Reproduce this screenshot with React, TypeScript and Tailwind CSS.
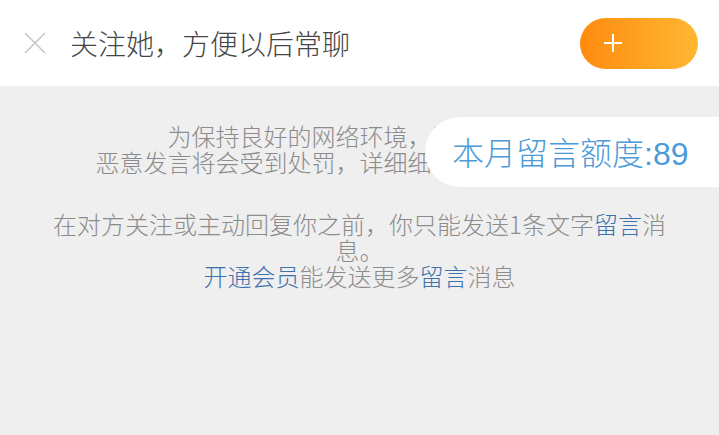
import React from "react";

const font = { fontFamily: '"Noto Sans CJK SC", "Noto Sans", sans-serif' };

export default function App() {
  return (
    <div
      className="relative w-[719px] h-[435px] overflow-hidden bg-[#efefef] font-light"
      style={font}
    >
      <div className="flex h-[86px] items-center bg-white pl-[24px] pr-[21px]">
        <svg width="22" height="22" viewBox="0 0 22 22" className="shrink-0">
          <path d="M1 1 L21 21 M21 1 L1 21" stroke="#c6c6c6" strokeWidth="1.6" fill="none" />
        </svg>
        <div className="ml-[24px] text-[28px] leading-none text-[#454545]">关注她，方便以后常聊</div>
        <button className="ml-auto flex h-[51px] w-[118px] items-center rounded-full bg-gradient-to-r from-[#ff8a0c] to-[#ffb732] pl-[23px]">
          <svg width="20" height="20" viewBox="0 0 20 20">
            <path d="M10 1 V19 M1 10 H19" stroke="#fff" strokeWidth="2" fill="none" />
          </svg>
        </button>
      </div>

      <div className="pt-[37px] text-center text-[24px] leading-[26px] text-[#8c8c8c]">
        <div>为保持良好的网络环境，请文明聊天</div>
        <div>恶意发言将会受到处罚，详细细则请查看社区规范</div>
        <div className="mt-[36px]">
          在对方关注或主动回复你之前，你只能发送1条文字<span className="text-[#3d72ad]">留言</span>消
        </div>
        <div>息。</div>
        <div>
          <span className="text-[#3d72ad]">开通会员</span>能发送更多<span className="text-[#3d72ad]">留言</span>消息
        </div>
      </div>

      <div className="absolute left-[425px] right-0 top-[117px] flex h-[70px] items-center rounded-l-[35px] bg-white pl-[27px]">
        <span className="text-[32px] leading-none text-[#4b9bd9]">
          本月留言额度<span style={{ fontFamily: '"Liberation Sans", "Noto Sans CJK SC", sans-serif' }}>:89</span>
        </span>
      </div>
    </div>
  );
}
